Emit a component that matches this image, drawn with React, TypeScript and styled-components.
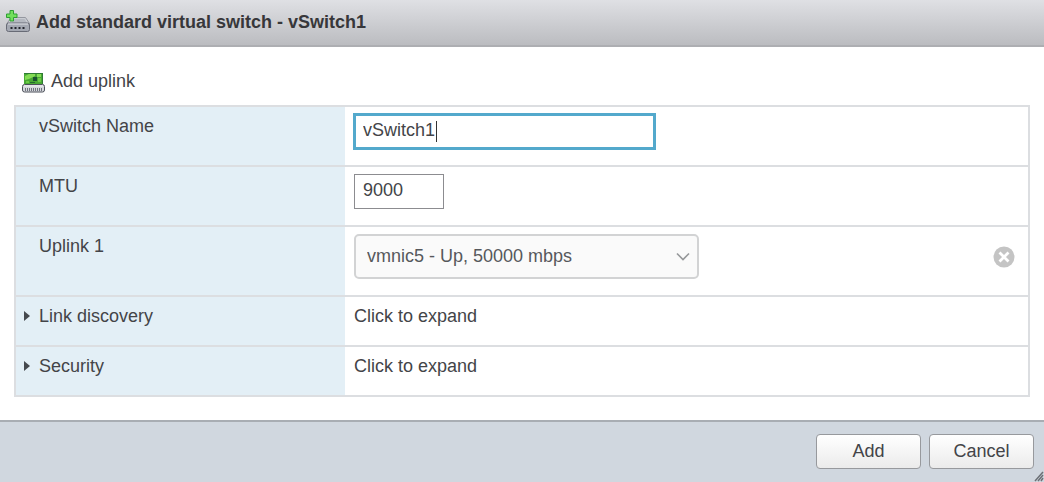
import React from 'react';
import styled, { createGlobalStyle } from 'styled-components';

const GlobalStyle = createGlobalStyle`
  *, *::before, *::after { box-sizing: border-box; }
  body {
    margin: 0;
    background: #fff;
    color: #434448;
    font: 18px/24px "Liberation Sans", Arial, sans-serif;
  }
  button, input, select { font: inherit; color: inherit; margin: 0; }
`;

const Dialog = styled.form`
  display: flex;
  flex-direction: column;
  min-height: 100vh;
`;

const Header = styled.header`
  display: flex;
  align-items: center;
  gap: 6px;
  height: 47px;
  padding: 0 6px 2px;
  background: linear-gradient(#dfe0e4, #bbbcc0);
  border-bottom: 2px solid #adaeb2;
`;

const Title = styled.h1`
  margin: 0;
  font-size: 18px;
  line-height: 24px;
  color: #37373a;
`;

const Body = styled.main`
  flex: 1;
  padding: 21px 14px 23px;
`;

const LinkButton = styled.button`
  display: flex;
  align-items: center;
  gap: 6px;
  margin: 0 0 12px 8px;
  padding: 0;
  border: 0;
  background: none;
  cursor: pointer;

  svg { margin-top: 4px; }
`;

const Settings = styled.div`
  border: 2px solid #dcdee1;
  border-bottom-width: 0;
`;

const Row = styled.div<{ $height: number }>`
  display: flex;
  min-height: ${(p) => p.$height}px;
  border-bottom: 2px solid #dcdee1;
`;

const LabelCell = styled.div`
  flex: 0 0 329px;
  padding: 7px 8px;
  background: #e3eff6;
`;

const FieldLabel = styled.label`
  display: block;
  padding-left: 15px;
`;

const ExpandButton = styled.button`
  display: flex;
  align-items: center;
  gap: 9px;
  padding: 0;
  border: 0;
  background: none;
  cursor: pointer;
`;

const ValueCell = styled.div`
  flex: 1;
  display: flex;
  justify-content: space-between;
  align-items: flex-start;
  padding: 7px 13px 7px 9px;
`;

const TextInput = styled.input<{ $width: number }>`
  width: ${(p) => p.$width}px;
  height: 35px;
  padding: 0 8px 2px;
  border: 1px solid #8c8c90;
  border-radius: 0;
  background: #fff;
  outline: none;
`;

const NameInput = styled(TextInput)`
  height: 37px;
  margin: -1px 0 0 -1px;
  padding-left: 7px;
  border: 3px solid #53a9cc;
  caret-color: transparent;
  background: linear-gradient(#333, #333) 80px 5px / 1px 21px no-repeat #fff;
`;

const SelectWrap = styled.div`
  display: grid;
  align-items: center;
  width: 345px;

  > * { grid-area: 1 / 1; }
  > svg { justify-self: end; margin-right: 9px; pointer-events: none; }
`;

const Select = styled.select`
  appearance: none;
  width: 100%;
  height: 45px;
  padding: 0 32px 2px 11px;
  border: 2px solid #d2d3d4;
  border-radius: 5px;
  background: #fafafa;
  color: #56585c;
`;

const RemoveButton = styled.button`
  display: flex;
  align-items: center;
  height: 45px;
  padding: 0;
  border: 0;
  background: none;
  cursor: pointer;
`;

const Footer = styled.footer`
  position: relative;
  display: flex;
  justify-content: flex-end;
  gap: 8px;
  padding: 12px 10px 13px;
  background: #d0d7df;
  border-top: 2px solid #a8adb3;
`;

const ActionButton = styled.button`
  width: 105px;
  height: 35px;
  padding: 0 0 2px;
  border: 1px solid #97999d;
  border-radius: 4px;
  background: linear-gradient(#fff, #ebebeb);
  cursor: pointer;
`;

const ResizeGrip = styled.svg`
  position: absolute;
  right: 0;
  bottom: 0;
`;

const SwitchIcon = () => (
  <svg width="24" height="24" viewBox="0 0 24 24" aria-hidden="true">
    <path d="M5 7.500h14.500l4 6H1z" fill="#c9ccd2" stroke="#94979f" />
    <path d="M8 9h10.500l2.500 4H6z" fill="#b4b8c0" />
    <rect x="0.5" y="13" width="23" height="8.500" rx="2" fill="#a4a8b2" stroke="#686b76" />
    <path d="M2 14h20" stroke="#dfe1e6" />
    <path d="M4.500 18h2M8.500 18h2M12.500 18h2M16.500 18h2" stroke="#24262e" strokeWidth="2" />
    <path d="M4 .5h3.500V4H11v3.500H7.500V11H4V7.500H.5V4H4z" fill="#72e05c" stroke="#2f9f34" strokeLinejoin="round" />
  </svg>
);

const AdapterIcon = () => (
  <svg width="23" height="21" viewBox="0 0 23 21" aria-hidden="true">
    <rect x="2" y="1" width="19" height="11" fill="#48a834" />
    <path d="M2 1.500h19M20.500 1v11" stroke="#2f7b34" />
    <path d="M3 4l4-2h6v2l-6 3-4 1zM15 2h4v3h-4z" fill="#85dc55" />
    <path d="M11 5h4v4h-4z" fill="#1a5230" />
    <path d="M16 6h3v4h-3zM4 9h3v2H4z" fill="#6bcb45" />
    <path d="M8 10.500h5" stroke="#226c2b" />
    <rect x=".5" y="12.500" width="22" height="7.500" rx="2" fill="#d5d7dc" stroke="#4c505a" />
    <path d="M2 14h19" stroke="#f1f2f4" />
    <path d="M3 17.500h17" stroke="#70747e" strokeWidth="3" strokeDasharray="1 1" />
  </svg>
);

const Triangle = () => (
  <svg width="6" height="10" viewBox="0 0 6 10" aria-hidden="true">
    <path d="M0 0l6 5-6 5z" fill="#45494e" />
  </svg>
);

const Chevron = () => (
  <svg width="14" height="9" viewBox="0 0 14 9" aria-hidden="true">
    <path d="M1 1.500l6 6 6-6" fill="none" stroke="#96989a" strokeWidth="1.600" />
  </svg>
);

const RemoveIcon = () => (
  <svg width="22" height="22" viewBox="0 0 22 22" aria-hidden="true">
    <circle cx="11" cy="11" r="10.500" fill="#c4c4c4" />
    <path d="M6.500 6.500l9 9M15.500 6.500l-9 9" stroke="#fff" strokeWidth="2.800" />
  </svg>
);

export default function App() {
  return (
    <>
      <GlobalStyle />
      <Dialog onSubmit={(e) => e.preventDefault()}>
        <Header>
          <SwitchIcon />
          <Title>Add standard virtual switch - vSwitch1</Title>
        </Header>
        <Body>
          <LinkButton type="button">
            <AdapterIcon />
            Add uplink
          </LinkButton>
          <Settings>
            <Row $height={60}>
              <LabelCell><FieldLabel htmlFor="name">vSwitch Name</FieldLabel></LabelCell>
              <ValueCell><NameInput id="name" $width={303} defaultValue="vSwitch1" /></ValueCell>
            </Row>
            <Row $height={60}>
              <LabelCell><FieldLabel htmlFor="mtu">MTU</FieldLabel></LabelCell>
              <ValueCell><TextInput id="mtu" $width={90} defaultValue="9000" /></ValueCell>
            </Row>
            <Row $height={70}>
              <LabelCell><FieldLabel htmlFor="uplink">Uplink 1</FieldLabel></LabelCell>
              <ValueCell>
                <SelectWrap>
                  <Select id="uplink" defaultValue="vmnic5">
                    <option value="vmnic5">vmnic5 - Up, 50000 mbps</option>
                  </Select>
                  <Chevron />
                </SelectWrap>
                <RemoveButton type="button" aria-label="Remove uplink"><RemoveIcon /></RemoveButton>
              </ValueCell>
            </Row>
            <Row $height={50}>
              <LabelCell>
                <ExpandButton type="button" aria-expanded="false"><Triangle />Link discovery</ExpandButton>
              </LabelCell>
              <ValueCell>Click to expand</ValueCell>
            </Row>
            <Row $height={50}>
              <LabelCell>
                <ExpandButton type="button" aria-expanded="false"><Triangle />Security</ExpandButton>
              </LabelCell>
              <ValueCell>Click to expand</ValueCell>
            </Row>
          </Settings>
        </Body>
        <Footer>
          <ActionButton type="submit">Add</ActionButton>
          <ActionButton type="button">Cancel</ActionButton>
          <ResizeGrip width="10" height="11" viewBox="0 0 10 11" aria-hidden="true">
            <path d="M1 10l8-9M4 10l5-6M7 10l2-3" stroke="#6c7076" strokeWidth="1.500" />
          </ResizeGrip>
        </Footer>
      </Dialog>
    </>
  );
}
